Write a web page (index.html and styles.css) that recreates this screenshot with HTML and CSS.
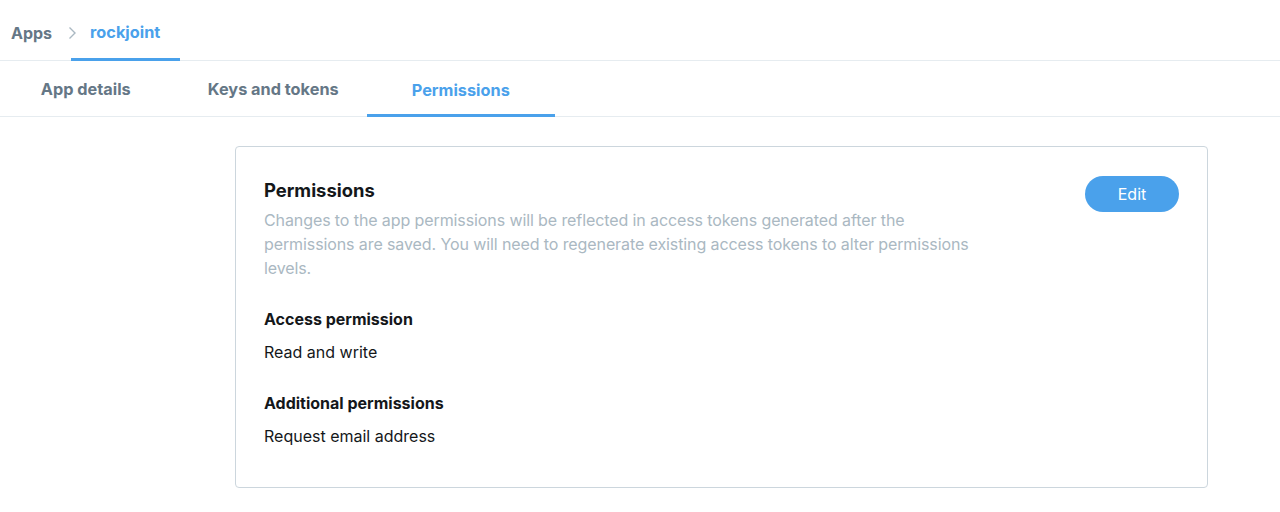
FILE: index.html
```html
<!DOCTYPE html>
<html>
<head>
<meta charset="utf-8">
<link rel="stylesheet" href="styles.css">
</head>
<body>
<header class="crumbs">
  <span class="crumb">Apps</span>
  <svg class="chev" width="9" height="14" viewBox="0 0 9 14"><path d="M1.5 1.5 L7 7 L1.5 12.5" fill="none" stroke="#aab8c2" stroke-width="1.4"/></svg>
  <span class="crumb current">rockjoint</span>
</header>
<nav class="tabs">
  <span class="tab">App details</span>
  <span class="tab">Keys and tokens</span>
  <span class="tab active">Permissions</span>
</nav>
<main class="main">
  <section class="card">
    <div class="card-head">
      <div class="head-text">
        <h2 class="title">Permissions</h2>
        <p class="desc">Changes to the app permissions will be reflected in access tokens generated after the permissions are saved. You will need to regenerate existing access tokens to alter permissions levels.</p>
      </div>
      <button class="edit">Edit</button>
    </div>
    <div class="field">
      <h3 class="label">Access permission</h3>
      <p class="value">Read and write</p>
    </div>
    <div class="field">
      <h3 class="label">Additional permissions</h3>
      <p class="value">Request email address</p>
    </div>
  </section>
</main>
</body>
</html>
```
FILE: styles.css
```css
* { box-sizing: border-box; }
html, body { margin: 0; padding: 0; background: #fff; }
body {
  font-family: Inter, "Liberation Sans", sans-serif;
  color: #14171a;
  width: 1280px;
  height: 512px;
  overflow: hidden;
}
.crumbs {
  height: 61px;
  display: flex;
  align-items: stretch;
  border-bottom: 1px solid #e6ecf0;
  padding-left: 11px;
}
.crumb {
  display: flex;
  align-items: center;
  font-size: 16px;
  font-weight: 700;
  color: #657786;
  padding-top: 6px;
}
.chev {
  align-self: center;
  margin: 5px 0 0 16px;
}
.crumb.current {
  color: #4aa1eb;
  font-size: 16.3px;
  padding: 6px 20px 0 19px;
  margin-left: -6px;
  border-bottom: 3px solid #4aa1eb;
  margin-bottom: -1px;
}
.tabs {
  height: 56px;
  display: flex;
  border-bottom: 1px solid #e6ecf0;
  margin-left: -8px;
}
.tab {
  width: 187.5px;
  display: flex;
  align-items: center;
  justify-content: center;
  font-size: 16.3px;
  font-weight: 700;
  color: #657786;
  padding-top: 1px;
}
.tab.active {
  color: #4aa1eb;
  border-bottom: 3px solid #4aa1eb;
  margin-bottom: -1px;
  padding-top: 4px;
}
.main {
  padding: 29px 72px 0 235px;
}
.card {
  border: 1px solid #ccd6dd;
  border-radius: 4px;
  padding: 28px 28px 29px 28px;
  height: 342px;
}
.card-head {
  display: flex;
  justify-content: space-between;
  align-items: flex-start;
}
.head-text { width: 720px; }
.title {
  margin: 2px 0 0;
  font-size: 18.4px;
  font-weight: 700;
  line-height: 26px;
}
.desc {
  margin: 5px 0 0;
  font-size: 16px;
  line-height: 24px;
  color: #aab8c2;
  letter-spacing: -0.1px;
}
.edit {
  width: 94px;
  height: 36px;
  border: none;
  border-radius: 18px;
  background: #4aa1eb;
  color: #fff;
  font-family: inherit;
  font-size: 16px;
  margin-top: 1px;
  margin-right: 0;
  padding: 0;
}
.field { margin-top: 27px; }
.field + .field { margin-top: 27px; }
.label {
  margin: 0;
  font-size: 16px;
  font-weight: 700;
  line-height: 24px;
}
.value {
  margin: 9px 0 0;
  font-size: 16px;
  line-height: 24px;
}
```
